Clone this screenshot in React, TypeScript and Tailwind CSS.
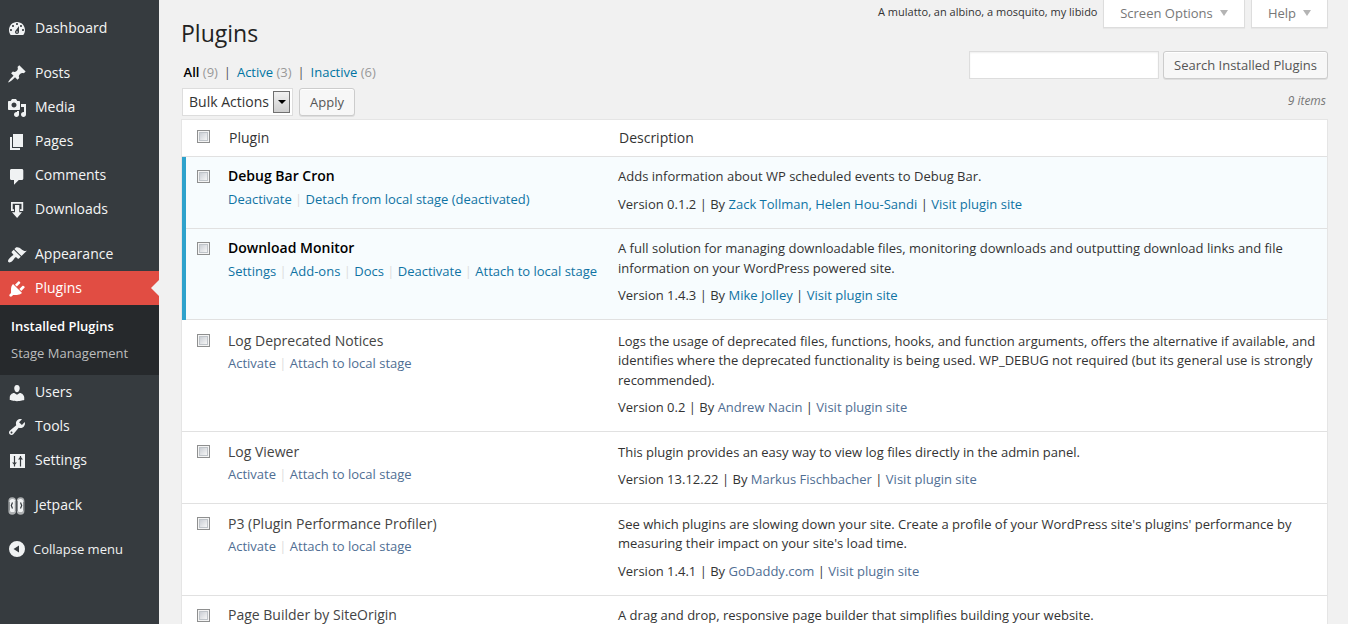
import React from "react";

type IconProps = { children: React.ReactNode };

function Icon({ children }: IconProps) {
  return (
    <svg viewBox="0 0 20 20" className="mt-0.5 mr-2 ml-[7px] size-5 shrink-0" fill="#f0f2f3">
      {children}
    </svg>
  );
}

const icons = {
  dashboard: (
    <path fillRule="evenodd" d="M3.76 16h12.48c1.1-1.37 1.76-3.11 1.76-5 0-4.42-3.58-8-8-8s-8 3.58-8 8c0 1.89.66 3.63 1.76 5zM10 4c.55 0 1 .45 1 1s-.45 1-1 1-1-.45-1-1 .45-1 1-1zM6 6c.55 0 1 .45 1 1s-.45 1-1 1-1-.45-1-1 .45-1 1-1zm8 0c.55 0 1 .45 1 1s-.45 1-1 1-1-.45-1-1 .45-1 1-1zm-5.37 5.55L12 7v6c0 1.1-.9 2-2 2s-2-.9-2-2c0-.57.24-1.08.63-1.45zM4 10c.55 0 1 .45 1 1s-.45 1-1 1-1-.45-1-1 .45-1 1-1zm12 0c.55 0 1 .45 1 1s-.45 1-1 1-1-.45-1-1 .45-1 1-1zM10 12.2a.8.8 0 1 0 0 1.6.8.8 0 0 0 0-1.6z" />
  ),
  posts: (
    <path d="M10.44 3.02l1.82-1.82 6.36 6.35-1.83 1.82c-1.05-.68-2.48-.57-3.41.36l-.75.75c-.92.93-1.04 2.35-.35 3.41l-1.83 1.82-2.41-2.41-2.8 2.79c-.42.42-3.38 2.71-3.8 2.29s1.86-3.39 2.28-3.81l2.79-2.79L4.1 9.36l1.83-1.82c1.05.69 2.48.57 3.4-.36l.75-.75c.93-.92 1.05-2.35.36-3.41z" />
  ),
  media: (
    <path fillRule="evenodd" d="M13 11V4c0-.55-.45-1-1-1h-1.67L9 1H5L3.67 3H2c-.55 0-1 .45-1 1v7c0 .55.45 1 1 1h10c.55 0 1-.45 1-1zM7 4.5c1.38 0 2.5 1.12 2.5 2.5S8.38 9.5 7 9.5 4.5 8.38 4.5 7 5.62 4.5 7 4.5zM14 6h5v10.5c0 1.38-1.12 2.5-2.5 2.5S14 17.88 14 16.5s1.12-2.5 2.5-2.5c.17 0 .34.02.5.05V9h-3V6zm-4 8.05V13h2v3.5c0 1.38-1.12 2.5-2.5 2.5S7 17.88 7 16.5 8.12 14 9.5 14c.17 0 .34.02.5.05z" />
  ),
  pages: <path d="M6 15V2h10v13H6zm-1 1h8v2H3V5h2v11z" />,
  comments: (
    <path d="M4.5 3h10.300c.9 0 1.500.6 1.500 1.500v8c0 .9-.6 1.500-1.500 1.500H11.800L7 18.800V14H4.500C3.600 14 3 13.400 3 12.500v-8C3 3.600 3.600 3 4.500 3z" />
  ),
  downloads: (
    <path d="M4 2h12.200v9H13V9.300h1.500V3.700H5.700v5.600H7V11H4V2zM8 5h4.300v7.300H15L10.100 18 5 12.300h3V5z" />
  ),
  appearance: (
    <path d="M14.48 11.06L7.41 3.99l1.5-1.5c.5-.56 2.3-.47 3.51.32 1.21.8 1.43 1.28 2.91 2.1 1.18.64 2.45 1.26 4.45.85zm-.71.71L6.7 4.7 4.93 6.47c-.39.39-.39 1.02 0 1.41l1.06 1.06c.39.39.39 1.03 0 1.42-.6.6-1.43 1.11-2.21 1.69-.35.26-.7.53-1.01.84C1.43 14.23.4 16.08 1.4 17.07c.99 1 2.84-.03 4.18-1.36.31-.31.58-.66.85-1.02.57-.78 1.08-1.61 1.69-2.21.39-.39 1.02-.39 1.41 0l1.06 1.06c.39.39 1.02.39 1.41 0z" />
  ),
  plugins: (
    <path fill="#fff" d="M13.11 4.36L9.87 7.6 8 5.73l3.24-3.24c.35-.34 1.05-.2 1.56.32.52.51.66 1.21.31 1.55zm-8 1.77l.91-1.12 9.01 9.01-1.19.84c-.71.71-2.63 1.16-3.82 1.16H6.14L4.9 17.26c-.59.59-1.54.59-2.12 0-.59-.58-.59-1.53 0-2.12l1.24-1.24v-3.88c0-1.13.4-3.19 1.09-3.89zm7.26 3.97l3.24-3.24c.34-.35 1.04-.21 1.55.31.52.51.66 1.21.31 1.55l-3.24 3.25z" />
  ),
  users: (
    <path d="M10 9.25c-2.27 0-2.73-3.44-2.73-3.44C7 4.02 7.82 2 9.97 2c2.16 0 2.98 2.02 2.71 3.81 0 0-.41 3.44-2.68 3.44zm0 2.57L12.72 10c2.39 0 4.52 2.33 4.52 4.53v2.49s-3.65 1.13-7.24 1.13c-3.65 0-7.24-1.13-7.24-1.13v-2.49c0-2.25 1.94-4.48 4.47-4.48z" />
  ),
  tools: (
    <path fillRule="evenodd" d="M16.68 9.77c-1.34 1.34-3.3 1.67-4.95.99l-5.41 6.52c-.99.99-2.59.99-3.58 0s-.99-2.59 0-3.57l6.52-5.42c-.68-1.65-.35-3.61.99-4.95 1.28-1.28 3.12-1.62 4.72-1.06l-2.89 2.89 2.82 2.82 2.86-2.87c.53 1.58.18 3.39-1.08 4.65zM3.81 16.21c.4.39 1.04.39 1.43 0 .4-.4.4-1.04 0-1.43-.39-.4-1.03-.4-1.43 0-.39.39-.39 1.03 0 1.43z" />
  ),
  settings: (
    <>
      <path d="M3 3h15v14H3z" />
      <path d="M7.500 5v10.500M13.500 5v10.500" stroke="#363b3f" strokeWidth="1.200" />
      <path d="M5 11.500h5L7.500 14zM11 8.500h5L13.500 5.500z" fill="#363b3f" />
    </>
  ),
  jetpack: (
    <>
      <rect x="1.400" y="1.300" width="7.600" height="17.400" rx="3.800" fill="#aeb1b3" />
      <rect x="9.800" y="1.300" width="7.600" height="17.400" rx="3.800" fill="#aeb1b3" />
      <rect x="2.700" y="3" width="5.600" height="13" rx="2.600" />
      <rect x="10.600" y="3" width="5.600" height="13" rx="2.600" />
      <path d="M2.300 6v8.500M16.600 6v8.500M8.300 5v10M10.500 5v10" stroke="#6d7174" strokeWidth=".7" />
      <path d="M5.500 6.500L4.300 9.500l1.200 3M13.500 6.500l1.200 3-1.200 3" fill="none" stroke="#363b3f" strokeWidth="1.200" />
    </>
  ),
  collapse: (
    <path fillRule="evenodd" d="M10 1a8 8 0 1 0 0 16 8 8 0 0 0 0-16zM12 5.500v7L6.500 9z" />
  ),
};

function MenuItem({ icon, label }: { icon: React.ReactNode; label: string }) {
  return (
    <a className="flex h-[34px] items-center text-[14px] leading-[18px] text-[#f4f5f5]">
      <Icon>{icon}</Icon>
      {label}
    </a>
  );
}

function Sidebar() {
  return (
    <nav className="h-full w-[159px] shrink-0 bg-[#363b3f] pt-[11px]">
      <MenuItem icon={icons.dashboard} label="Dashboard" />
      <div className="h-[11px]" />
      <MenuItem icon={icons.posts} label="Posts" />
      <MenuItem icon={icons.media} label="Media" />
      <MenuItem icon={icons.pages} label="Pages" />
      <MenuItem icon={icons.comments} label="Comments" />
      <MenuItem icon={icons.downloads} label="Downloads" />
      <div className="h-[11px]" />
      <MenuItem icon={icons.appearance} label="Appearance" />
      <a className="flex h-[34px] items-center bg-[#e14d43] text-[14px] leading-[18px] text-white">
        <Icon>{icons.plugins}</Icon>
        Plugins
        <span className="ml-auto border-y-8 border-r-8 border-y-transparent border-r-[#f1f1f1]" />
      </a>
      <div className="flex h-[70px] flex-col bg-[#26292c] pt-2 pl-[11px] text-[13px]">
        <a className="h-[27px] leading-[27px] font-semibold text-white">Installed Plugins</a>
        <a className="h-[27px] leading-[27px] text-[#bcbdbe]">Stage Management</a>
      </div>
      <MenuItem icon={icons.users} label="Users" />
      <MenuItem icon={icons.tools} label="Tools" />
      <MenuItem icon={icons.settings} label="Settings" />
      <div className="h-[11px]" />
      <MenuItem icon={icons.jetpack} label="Jetpack" />
      <div className="h-[10px]" />
      <a className="flex h-[34px] items-center text-[13px] text-[#f0f1f1]">
        <Icon>{icons.collapse}</Icon>
        <span className="mt-0.5 -ml-0.5">Collapse menu</span>
      </a>
    </nav>
  );
}

function Checkbox() {
  return (
    <span className="block size-[13px] border border-[#8e8f8f] bg-[#f4f4f4] p-px">
      <span className="block size-full border border-[#bfc4c9] bg-linear-to-br from-[#cbcfd5] to-[#f6f6f6]" />
    </span>
  );
}

type Plugin = {
  name: string;
  active?: boolean;
  actions: string[];
  description: string[];
  version: string;
  author: string;
  row: string;
  title: string;
  body: string;
};

const plugins: Plugin[] = [
  {
    name: "Debug Bar Cron",
    active: true,
    actions: ["Deactivate", "Detach from local stage (deactivated)"],
    description: ["Adds information about WP scheduled events to Debug Bar."],
    version: "0.1.2",
    author: "Zack Tollman, Helen Hou-Sandi",
    row: "h-[72px]",
    title: "pt-[9px] pb-1",
    body: "pt-[10px]",
  },
  {
    name: "Download Monitor",
    active: true,
    actions: ["Settings", "Add-ons", "Docs", "Deactivate", "Attach to local stage"],
    description: [
      "A full solution for managing downloadable files, monitoring downloads and outputting download links and file",
      "information on your WordPress powered site.",
    ],
    version: "1.4.3",
    author: "Mike Jolley",
    row: "h-[91px]",
    title: "pt-[9px] pb-1",
    body: "pt-[10px]",
  },
  {
    name: "Log Deprecated Notices",
    actions: ["Activate", "Attach to local stage"],
    description: [
      "Logs the usage of deprecated files, functions, hooks, and function arguments, offers the alternative if available, and",
      "identifies where the deprecated functionality is being used. WP_DEBUG not required (but its general use is strongly",
      "recommended).",
    ],
    version: "0.2",
    author: "Andrew Nacin",
    row: "h-[112px] pt-px",
    title: "pt-[10px] pb-[3px]",
    body: "pt-[10.5px]",
  },
  {
    name: "Log Viewer",
    actions: ["Activate", "Attach to local stage"],
    description: ["This plugin provides an easy way to view log files directly in the admin panel."],
    version: "13.12.22",
    author: "Markus Fischbacher",
    row: "h-[72px]",
    title: "pt-[10px] pb-[3px]",
    body: "pt-[10.5px]",
  },
  {
    name: "P3 (Plugin Performance Profiler)",
    actions: ["Activate", "Attach to local stage"],
    description: [
      "See which plugins are slowing down your site. Create a profile of your WordPress site's plugins' performance by",
      "measuring their impact on your site's load time.",
    ],
    version: "1.4.1",
    author: "GoDaddy.com",
    row: "h-[92px]",
    title: "pt-[10px] pb-[3px]",
    body: "pt-[10.5px]",
  },
];

function PluginRow({ plugin }: { plugin: Plugin }) {
  const tone = plugin.active ? "border-l-4 border-l-[#2ea2cc] bg-[#f7fcfe]" : "bg-white";
  const inset = plugin.active ? "" : "pl-1";
  const link = plugin.active ? "text-[#0f73a3]" : "text-[#4f6e93]";
  const weight = plugin.active ? "font-semibold text-black" : "text-[#444]";
  return (
    <div className={`flex shrink-0 text-[13px] text-[#333] ${tone} ${plugin.row}`}>
      <div className={`flex w-full border-b border-[#e1e1e1] ${inset}`}>
        <div className="w-[42px] shrink-0 pt-[13px] pl-[11px]">
          <Checkbox />
        </div>
        <div className="w-[390px] shrink-0 whitespace-nowrap">
          <div className={`text-[14px] leading-5 ${weight} ${plugin.title}`}>{plugin.name}</div>
          <div className={`flex leading-[19px] ${link}`}>
            {plugin.actions.map((action, index) => (
              <span key={action} className="flex">
                {index > 0 && <span className="w-[13.85px] text-center text-[#ddd]">|</span>}
                {action}
              </span>
            ))}
          </div>
        </div>
        <div className={`leading-[19.5px] tracking-[0.007px] whitespace-nowrap ${plugin.body}`}>
          {plugin.description.map((line) => (
            <div key={line}>{line}</div>
          ))}
          <div className="pt-2">
            Version {plugin.version} | By <a className={link}>{plugin.author}</a> |{" "}
            <a className={link}>Visit plugin site</a>
          </div>
        </div>
      </div>
    </div>
  );
}

function Triangle() {
  return <span className="mb-0.5 border-x-4 border-t-[6px] border-x-transparent border-t-[#b4b4b4]" />;
}

export default function App() {
  return (
    <div className="flex h-[624px] w-[1348px] overflow-hidden bg-[#f1f1f1] font-['Open_Sans',sans-serif] text-[13px] text-[#444]">
      <Sidebar />
      <main className="flex min-w-0 flex-1 flex-col pr-5 pl-[22px]">
        <header className="flex h-[51px] items-start">
          <h1 className="pt-[18px] text-[23px] leading-[31px] text-[#222]">Plugins</h1>
          <p className="ml-auto pt-1 pr-[5.5px] text-[11px] leading-4 text-[#333]">
            A mulatto, an albino, a mosquito, my libido
          </p>
          <div className="flex gap-1.5 text-[#777]">
            <button className="flex h-7 w-[142px] items-center justify-center gap-[7px] border border-t-0 border-[#ddd] bg-white shadow-[0_1px_1px_rgba(0,0,0,0.04)]">
              Screen Options <Triangle />
            </button>
            <button className="flex h-7 w-[77px] items-center justify-center gap-[7px] border border-t-0 border-[#ddd] bg-white shadow-[0_1px_1px_rgba(0,0,0,0.04)]">
              Help <Triangle />
            </button>
          </div>
        </header>
        <div className="flex h-[36px] items-start">
          <div className="flex pt-3 pl-[2.6px] leading-[19px] whitespace-pre text-[#999]">
            <b className="font-semibold text-black">All</b> (9)
            <span className="w-[19px] text-center text-[#555]">|</span>
            <a className="text-[#0074a2]">Active</a> (3)
            <span className="w-[19px] text-center text-[#555]">|</span>
            <a className="text-[#0074a2]">Inactive</a> (6)
          </div>
          <div className="ml-auto flex gap-1">
            <input className="h-7 w-[190px] border border-[#ddd] bg-white shadow-[inset_0_1px_2px_rgba(0,0,0,0.07)]" />
            <button className="h-7 w-[165px] rounded-[3px] border border-[#ccc] bg-[#f7f7f7] pt-0.5 text-[#555] shadow-[inset_0_1px_0_#fff,0_1px_0_rgba(0,0,0,0.08)]">
              Search Installed Plugins
            </button>
          </div>
        </div>
        <div className="flex h-[32px] items-start pt-px pl-px">
          <div className="flex h-7 w-[111px] items-center justify-between border border-[#ddd] bg-white pr-0.5 pl-1.5 text-[14px] text-[#333]">
            <span className="pb-0.5">Bulk Actions</span>
            <span className="flex h-[22px] w-[17px] items-center justify-center border border-[#707070] bg-linear-to-b from-[#f2f2f2] to-[#cfcfcf]">
              <span className="border-x-[4px] border-t-4 border-x-transparent border-t-black" />
            </span>
          </div>
          <button className="ml-1.5 h-7 w-14 rounded-[3px] border border-[#ccc] bg-[#f7f7f7] pt-0.5 text-[#555] shadow-[inset_0_1px_0_#fff,0_1px_0_rgba(0,0,0,0.08)]">
            Apply
          </button>
          <span className="ml-auto pt-1 pr-0.5 text-[12px] leading-[18px] text-[#777] italic">9 items</span>
        </div>
        <section className="flex flex-1 flex-col overflow-hidden border border-b-0 border-[#e5e5e5] bg-white">
          <div className="flex h-[37px] shrink-0 items-center border-b border-[#e1e1e1] text-[14px] text-[#333]">
            <div className="w-[46px] pb-[3px] pl-[15px]">
              <Checkbox />
            </div>
            <div className="w-[391px] pb-0.5 pl-px">Plugin</div>
            <div className="pb-0.5">Description</div>
          </div>
          {plugins.map((plugin) => (
            <PluginRow key={plugin.name} plugin={plugin} />
          ))}
          <div className="flex h-7 shrink-0 pl-1 text-[13px] text-[#333]">
            <div className="w-[42px] shrink-0 pt-[13px] pl-[11px]">
              <Checkbox />
            </div>
            <div className="w-[390px] shrink-0 pt-[9px] text-[14px] leading-5 text-[#444]">
              Page Builder by SiteOrigin
            </div>
            <div className="pt-[10px] leading-[19.5px] tracking-[0.009px]">
              A drag and drop, responsive page builder that simplifies building your website.
            </div>
          </div>
        </section>
      </main>
    </div>
  );
}
